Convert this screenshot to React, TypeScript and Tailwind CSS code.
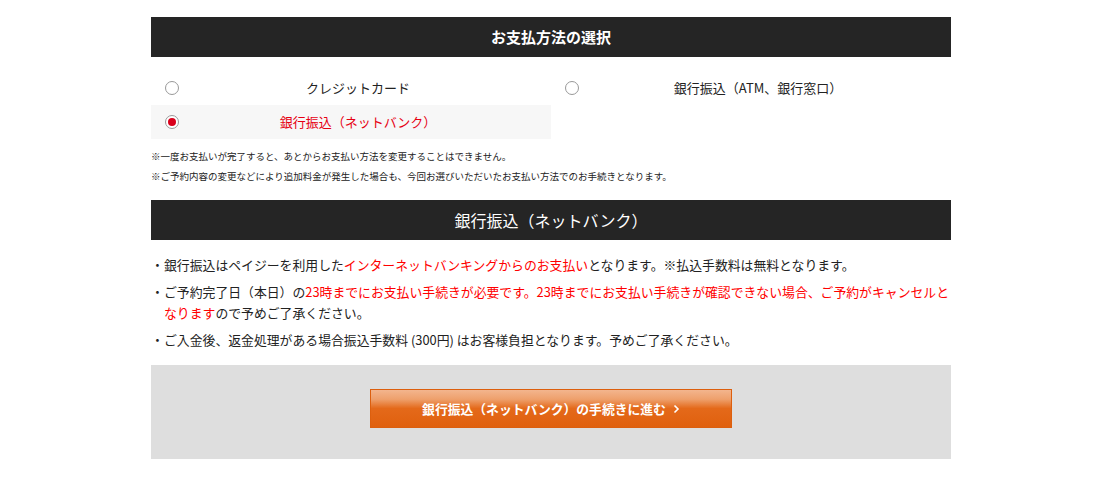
import React from "react";

const font = { fontFamily: '"Noto Sans CJK JP", "Noto Sans", sans-serif' };

function Radio({ checked }: { checked?: boolean }) {
  return (
    <span className="flex h-[14px] w-[14px] shrink-0 items-center justify-center rounded-full border border-[#999] bg-white">
      {checked && <span className="h-[8px] w-[8px] rounded-full bg-[#d9001b]" />}
    </span>
  );
}

function Option({ label, checked }: { label: string; checked?: boolean }) {
  return (
    <div className={`flex h-[34px] items-center pl-[14px] pr-[14px] ${checked ? "bg-[#f7f7f7]" : ""}`}>
      <Radio checked={checked} />
      <span className={`flex-1 text-center text-[13px] ${checked ? "text-[#e60012]" : "text-[#222]"}`}>{label}</span>
    </div>
  );
}

export default function App() {
  return (
    <div className="min-h-[482px] w-full bg-white pt-[17px]" style={font}>
      <div className="ml-[151px] w-[800px]">
        <div className="flex h-[40px] items-center justify-center bg-[#252525] text-[15px] font-bold text-white">
          お支払方法の選択
        </div>
        <div className="mt-[14px] grid grid-cols-2">
          <Option label="クレジットカード" />
          <Option label="銀行振込（ATM、銀行窓口）" />
          <Option label="銀行振込（ネットバンク）" checked />
          <div />
        </div>
        <div className="mt-[7px] text-[9.5px] leading-[20px] text-[#222]">
          <p>※一度お支払いが完了すると、あとからお支払い方法を変更することはできません。</p>
          <p>※ご予約内容の変更などにより追加料金が発生した場合も、今回お選びいただいたお支払い方法でのお手続きとなります。</p>
        </div>
        <div className="mt-[14px] flex h-[40px] items-center justify-center bg-[#252525] text-[16px] text-white">
          銀行振込（ネットバンク）
        </div>
        <ul className="mt-[14px] text-[12.85px] leading-[21px] text-[#222]">
          <li className="mb-[6px] flex">
            <span className="w-[13px] shrink-0">・</span>
            <span>
              銀行振込はペイジーを利用した<span className="text-[#ff0000]">インターネットバンキングからのお支払い</span>となります。※払込手数料は無料となります。
            </span>
          </li>
          <li className="mb-[6px] flex">
            <span className="w-[13px] shrink-0">・</span>
            <span>
              ご予約完了日（本日）の<span className="text-[#ff0000]">23時までにお支払い手続きが必要です。23時までにお支払い手続きが確認できない場合、ご予約がキャンセルとなります</span>ので予めご了承ください。
            </span>
          </li>
          <li className="flex">
            <span className="w-[13px] shrink-0">・</span>
            <span>ご入金後、返金処理がある場合振込手数料 (300円) はお客様負担となります。予めご了承ください。</span>
          </li>
        </ul>
        <div className="mt-[15px] flex h-[94px] justify-center bg-[#dedede] pt-[24px]">
          <button className="flex h-[39px] w-[362px] items-center justify-center gap-[7px] border border-[#dc5f0e] bg-[linear-gradient(to_bottom,#f3b58e_0%,#eea06c_25%,#e4691a_50%,#e0600e_100%)] text-[12.8px] font-bold text-white">
            <span>銀行振込（ネットバンク）の手続きに進む</span>
            <svg width="7" height="10" viewBox="0 0 7 10" fill="none" stroke="white" strokeWidth="1.6">
              <path d="M1.5 1.5 L5 5 L1.5 8.5" />
            </svg>
          </button>
        </div>
      </div>
    </div>
  );
}
